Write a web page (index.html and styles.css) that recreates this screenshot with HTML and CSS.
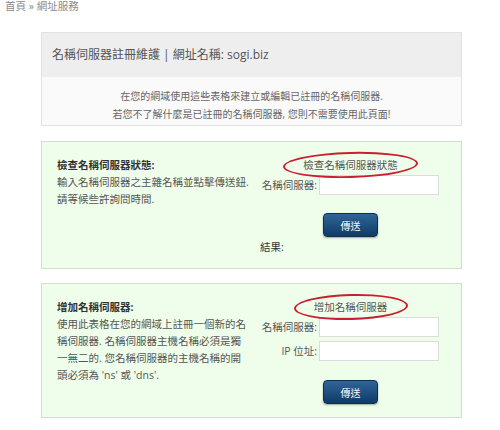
FILE: index.html
```html
<!DOCTYPE html>
<html lang="zh-Hant">
<head>
  <meta charset="UTF-8" />
  <title>網址服務 | 名稱伺服器註冊維護</title>
  <link rel="stylesheet" href="styles.css">
</head>
<body>
  <div class="crumb">首頁 » 網址服務</div>
  <main class="wrap">
    <section class="intro">
      <h2 class="intro-head">名稱伺服器註冊維護 | 網址名稱: sogi.biz</h2>
      <div class="intro-body">
        在您的網域使用這些表格來建立或編輯已註冊的名稱伺服器.<br>
        若您不了解什麼是已註冊的名稱伺服器, 您則不需要使用此頁面!
      </div>
    </section>

    <section class="panel">
      <div class="panel-info">
        <strong>檢查名稱伺服器狀態:</strong><br>
        輸入名稱伺服器之主雜名稱並點擊傳送鈕. 請等候些許詢問時間.
      </div>
      <form class="panel-form">
        <div class="form-title"><span class="circled">檢查名稱伺服器狀態</span></div>
        <div class="rows">
          <label for="ns1">名稱伺服器:</label>
          <input type="text" id="ns1" />
        </div>
        <button type="button" class="btn">傳送</button>
        <div class="result">結果:</div>
      </form>
    </section>

    <section class="panel">
      <div class="panel-info">
        <strong>增加名稱伺服器:</strong><br>
        使用此表格在您的網域上註冊一個新的名稱伺服器. 名稱伺服器主機名稱必須是獨一無二的. 您名稱伺服器的主機名稱的開頭必須為 'ns' 或 'dns'.
      </div>
      <form class="panel-form">
        <div class="form-title"><span class="circled">增加名稱伺服器</span></div>
        <div class="rows">
          <label for="ns2">名稱伺服器:</label>
          <input type="text" id="ns2" />
          <label for="ip">IP 位址:</label>
          <input type="text" id="ip" />
        </div>
        <button type="button" class="btn btn-add">傳送</button>
      </form>
    </section>
  </main>
</body>
</html>
```

FILE: styles.css
```css
body {
  margin: 0;
  background: #ffffff;
  color: #555;
  font-family: "Open Sans", "Noto Sans CJK TC", sans-serif;
}

.crumb {
  padding: 1px 0 0 5px;
  font-size: 10.5px;
  line-height: 11px;
  color: #8a8a8a;
}

.wrap {
  width: 421px;
  margin: 20px 0 0 41px;
}

.intro {
  border: 1px solid #e2e2e2;
}

.intro-head {
  margin: 0;
  height: 44px;
  padding-left: 10px;
  background: #eeeeee;
  font-size: 12px;
  font-weight: normal;
  line-height: 44px;
  color: #555;
}

.intro-body {
  padding: 10px 0 2px;
  background: #fafafa;
  text-align: center;
  font-size: 10px;
  line-height: 18px;
  color: #666;
}

.panel {
  display: grid;
  grid-template-columns: 193px 1fr;
  column-gap: 5px;
  margin-top: 15px;
  padding: 15px 15px 12px;
  border: 1px solid #d3dccf;
  background: #effeea;
  font-size: 10.5px;
  line-height: 17px;
}

.panel + .panel {
  margin-top: 14px;
  padding-bottom: 13px;
}

.panel-info {
  color: #555;
}

.panel-info strong {
  color: #333;
}

.panel-form {
  display: flex;
  flex-direction: column;
  align-items: center;
  margin: 0;
}

.form-title {
  text-align: center;
  color: #555;
}

.circled {
  position: relative;
  display: inline-block;
}

.circled::after {
  content: "";
  position: absolute;
  top: -5px;
  bottom: -4px;
  left: -20px;
  right: -20px;
  border: 2.5px solid #c91f30;
  border-radius: 50%;
  transform: rotate(-1.5deg);
}

.rows {
  display: grid;
  grid-template-columns: auto 120px;
  gap: 4px 2px;
  align-items: center;
  margin-top: 1px;
}

.rows label {
  text-align: right;
  color: #555;
}

.rows input {
  box-sizing: border-box;
  height: 20px;
  margin: 0;
  border: 1px solid #dcdcdc;
  background: #fff;
}

.btn {
  width: 55px;
  height: 24px;
  margin-top: 18px;
  border: 1px solid #0b2e52;
  border-radius: 4px;
  background: linear-gradient(#2f6598, #0f3b68);
  box-shadow: 0 1px 2px rgba(0, 0, 0, 0.35);
  color: #fff;
  font-family: inherit;
  font-size: 10px;
}

.btn-add {
  margin-top: 19px;
}

.result {
  align-self: flex-start;
  margin-top: 2px;
  padding-left: 5px;
  color: #333;
}
```
